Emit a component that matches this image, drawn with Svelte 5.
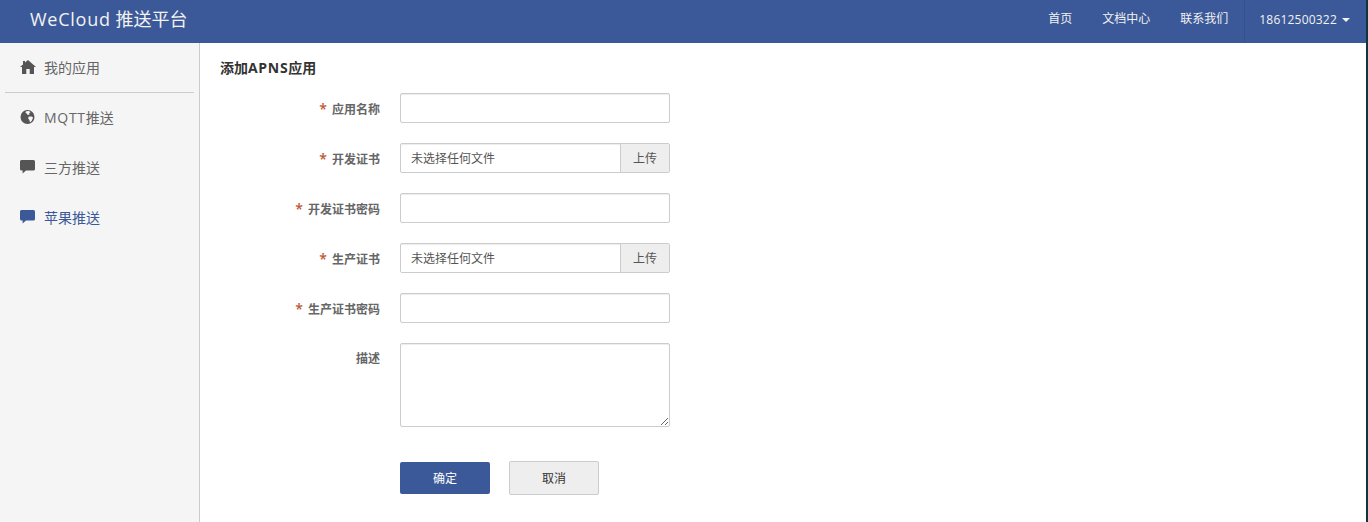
<script>
  const nav = ['首页', '文档中心', '联系我们'];
  const fields = [
    { label: '应用名称', type: 'text' },
    { label: '开发证书', type: 'file' },
    { label: '开发证书密码', type: 'text' },
    { label: '生产证书', type: 'file' },
    { label: '生产证书密码', type: 'text' }
  ];
</script>

<div class="shell">
  <div class="main">
    <header class="navbar">
      <a class="brand" href="#top"><span class="latin">WeCloud</span> 推送平台</a>
      <nav class="top-links">
        {#each nav as item}
          <a href="#top">{item}</a>
        {/each}
        <a class="user" href="#top"><span class="phone">18612500322</span><span class="caret"></span></a>
      </nav>
    </header>

    <div class="page">
      <aside class="sidebar">
        <a class="side-item first" href="#top">
          <svg viewBox="0 0 16 14" width="16" height="14"><path d="M8 0 L16 7 L14 7 L14 14 L9.7 14 L9.7 9 L6.3 9 L6.3 14 L2 14 L2 7 L0 7 L3 4.4 L3 1 L5 1 L5 2.6 Z" fill="#555"/></svg>
          <span>我的应用</span>
        </a>
        <div class="divider"></div>
        <a class="side-item" href="#top">
          <svg viewBox="0 0 16 14" width="16" height="14"><circle cx="7.5" cy="7" r="7" fill="#555"/><path d="M6 1.2 L9 1 L10.5 2.2 L9.1 3.2 L9.5 4.6 L7.7 5 L6.7 3.6 L5.5 3 Z M8.9 6.6 L11.5 6.4 L13.1 7.6 L11.9 10.4 L10.1 12.4 L9.3 10 L8.1 8.2 Z" fill="#f5f5f5"/></svg>
          <span><span class="mqtt">MQTT</span>推送</span>
        </a>
        <a class="side-item" href="#top">
          <svg viewBox="0 0 16 14" width="16" height="14"><path d="M1.5 0 H13.5 Q15 0 15 1.5 V9 Q15 10.5 13.5 10.5 H6 L2.6 13.6 V10.5 H1.5 Q0 10.5 0 9 V1.5 Q0 0 1.5 0 Z" fill="#555"/></svg>
          <span>三方推送</span>
        </a>
        <a class="side-item active" href="#top">
          <svg viewBox="0 0 16 14" width="16" height="14"><path d="M1.5 0 H13.5 Q15 0 15 1.5 V9 Q15 10.5 13.5 10.5 H6 L2.6 13.6 V10.5 H1.5 Q0 10.5 0 9 V1.5 Q0 0 1.5 0 Z" fill="#3b5998"/></svg>
          <span>苹果推送</span>
        </a>
      </aside>

      <main class="content">
        <h1>添加<span class="apns">APNS</span>应用</h1>
        <form class="form" onsubmit={(e) => e.preventDefault()}>
          {#each fields as f}
            <div class="row">
              <label><i>*</i>{f.label}</label>
              {#if f.type === 'file'}
                <div class="file">
                  <span class="file-name">未选择任何文件</span>
                  <span class="file-btn">上传</span>
                </div>
              {:else}
                <input type="text" />
              {/if}
            </div>
          {/each}
          <div class="row">
            <label class="plain">描述</label>
            <textarea></textarea>
          </div>
          <div class="actions">
            <button class="ok" type="submit">确定</button>
            <button class="cancel" type="button">取消</button>
          </div>
        </form>
      </main>
    </div>
  </div>
  <div class="edge"></div>
</div>

<style>
  :global(body) {
    font-family: "Open Sans", "Noto Sans CJK SC", sans-serif;
    background: #fff;
    overflow: hidden;
  }
  a { text-decoration: none; }

  .shell { display: flex; height: 522px; overflow: hidden; }
  .main { flex: 1; min-width: 0; }
  .edge { width: 2px; flex: none; background: #0d3641; }

  .navbar {
    height: 43px; background: #3b5998; display: flex; justify-content: space-between;
    align-items: stretch; padding-left: 30px;
  }
  .brand { color: #f2f2f2; font-size: 18px; line-height: 38px; }
  .latin { letter-spacing: .75px; }
  .top-links { display: flex; align-items: stretch; }
  .top-links a { color: #f2f2f2; font-size: 12px; margin-right: 30px; line-height: 37px; }
  .top-links .user {
    margin: 0 0 0 -14px; display: flex; align-items: center; gap: 5px;
    padding: 0 16px 5px 14px; border-left: 1px solid #34508b;
  }
  .phone { letter-spacing: .2px; }
  .caret { width: 0; height: 0; border-left: 4px solid transparent; border-right: 4px solid transparent; border-top: 4px solid #f2f2f2; margin-top: 2px; }

  .page { display: flex; height: 479px; }
  .sidebar { width: 189px; background: #f5f5f5; border-right: 1px solid #ccc; flex: none; padding: 0 5px; }
  .side-item {
    display: flex; align-items: center; height: 50px; color: #666; font-size: 14px; padding-left: 15px;
  }
  .side-item.first { height: 49px; padding-bottom: 2px; box-sizing: border-box; }
  .side-item svg { margin-right: 8px; flex: none; }
  .side-item.active { color: #3b5998; }
  .mqtt { letter-spacing: .7px; }
  .divider { border-top: 1px solid #ccc; margin-bottom: -1px; }

  .content { padding: 16px 20px; flex: 1; }
  h1 { margin: 0 0 16px; font-size: 14px; line-height: 18px; font-weight: 700; color: #333; }
  .apns { letter-spacing: .7px; }
  .row { display: flex; margin-bottom: 20px; }
  label {
    width: 160px; height: 30px; margin-right: 20px; text-align: right; font-size: 12px; font-weight: 600; color: #666; line-height: 33px;
  }
  label.plain { line-height: 31px; }
  label i { color: #c0562f; font-style: normal; font-size: 14px; line-height: 1; margin-right: 5px; }
  input, textarea, .file {
    width: 270px; box-sizing: border-box; border: 1px solid #ccc; border-radius: 2px; background: #fff;
    box-shadow: inset 0 1px 1px rgba(0,0,0,.075); margin: 0;
  }
  input { height: 30px; }
  textarea { height: 84px; display: block; }
  .file { height: 30px; display: flex; font-size: 12px; color: #555; line-height: 29px; }
  .file-name { flex: 1; padding-left: 10px; line-height: 30px; }
  .file-btn { width: 48px; background: #eee; border-left: 1px solid #ccc; text-align: center; }

  .actions { display: flex; align-items: center; padding: 14px 0 0 180px; gap: 19px; }
  button { font-family: inherit; font-size: 12px; border-radius: 2px; width: 90px; }
  .ok { height: 32px; background: #3b5998; color: #fff; border: 0; }
  .cancel { height: 34px; background: #eee; color: #333; border: 1px solid #ccc; }
</style>
